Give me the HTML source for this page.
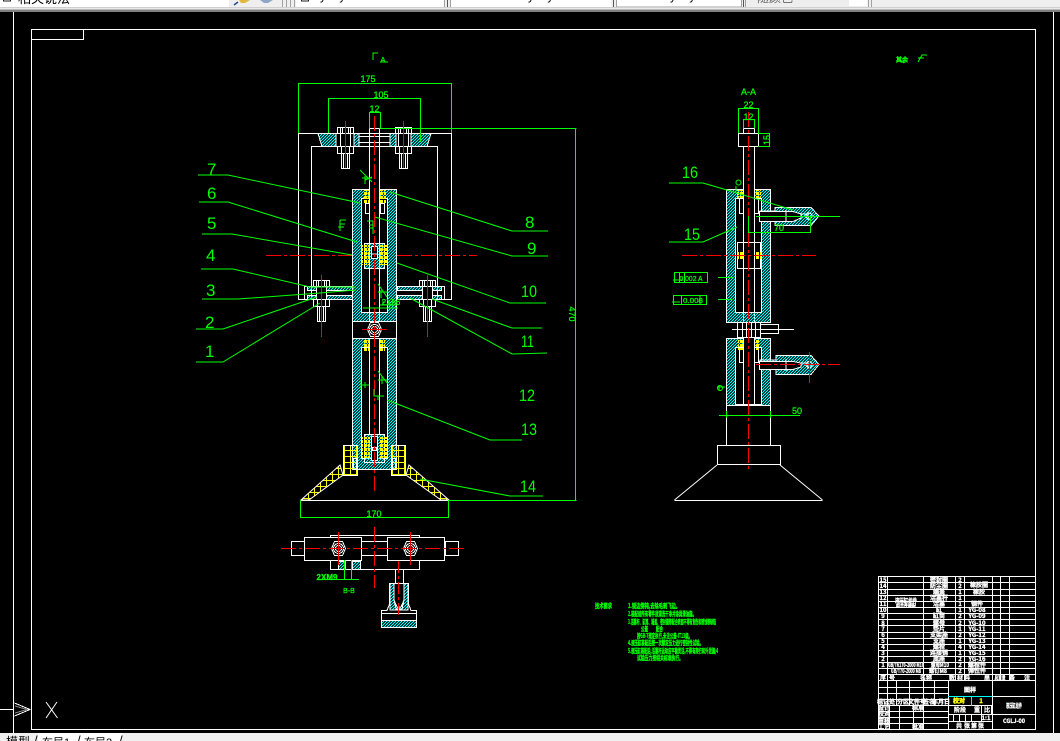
<!DOCTYPE html>
<html lang="zh"><head><meta charset="utf-8"><title>CAD</title>
<style>
html,body{margin:0;padding:0;width:1060px;height:741px;overflow:hidden;background:#f0f0f0;font-family:"Liberation Sans","Noto Sans CJK SC",sans-serif}
svg{position:absolute;left:0;top:0;display:block}
.n{font:17px "Liberation Sans",sans-serif;fill:#0f0}
.d{font:9px "Liberation Sans",sans-serif;fill:#0f0;text-anchor:middle;stroke:#0f0;stroke-width:.25}
.b{font:bold 6.5px "Noto Sans CJK SC",sans-serif;fill:#0f0;stroke:#0f0;stroke-width:.35}
.t{font:bold 6px "Noto Sans CJK SC","Liberation Sans",sans-serif;fill:#fff;text-anchor:middle;stroke:#fff;stroke-width:.3}
.y{font:bold 6px "Noto Sans CJK SC",sans-serif;fill:#ff0;text-anchor:middle;stroke:#ff0;stroke-width:.4}
.ui{font:13px "Liberation Sans","Noto Sans CJK SC",sans-serif;fill:#000}
</style></head><body>
<svg width="1060" height="741" viewBox="0 0 1060 741" xmlns="http://www.w3.org/2000/svg">
<defs>
<pattern id="h" width="3" height="3" patternUnits="userSpaceOnUse"><path d="M-1 1L1 -1M0 3L3 0M2 4L4 2" stroke="#0ff" stroke-width="1.1" shape-rendering="crispEdges"/></pattern>
<pattern id="yp" width="4" height="4" patternUnits="userSpaceOnUse"><rect width="3" height="3" fill="#ff0"/></pattern>
<pattern id="yg" width="6" height="6" patternUnits="userSpaceOnUse"><path d="M0 .5H6M2.5 0V6" stroke="#ff0" fill="none" shape-rendering="crispEdges"/></pattern>
<g id="bolt" fill="#000" stroke="#fff">
<rect x="-8" y="-6" width="16" height="6"/><path d="M-5 -6V0M5 -6V0M-3 -6V0M3 -6V0"/>
<rect x="-5" y="0" width="10" height="13"/><rect x="-8" y="13" width="16" height="7"/><path d="M-4 13V20M4 13V20"/>
<rect x="-4" y="20" width="8" height="15"/><path d="M-2 20V35M2 20V35"/>
</g>
<g id="hex" fill="#000" stroke="#fff"><polygon points="-7,0 -4,-7 4,-7 7,0 4,7 -4,7"/><circle r="5"/><circle r="3"/></g>
</defs>

<!-- top toolbar -->
<rect width="1060" height="12" fill="#efefef"/>
<rect x="0" y="0" width="229" height="7" fill="#fff"/>
<rect x="296" y="0" width="148" height="7" fill="#fff"/>
<rect x="451" y="0" width="160" height="7" fill="#fff"/>
<rect x="617" y="0" width="124" height="7" fill="#fff"/>
<rect x="749" y="0" width="100" height="6" fill="#eee"/><rect x="849" y="0" width="18" height="6" fill="#fff"/>
<g stroke="#a0a0a0" fill="none" shape-rendering="crispEdges">
<path d="M282.5 0V8M286.5 0V8M290.5 0V8M294.5 0V8"/><path d="M444.5 0V8M450.5 0V8"/><path d="M745.5 0V8H868.5V0M871.5 0V9"/><path d="M616.5 0V7H741.5V0"/>
</g>
<path d="M447.5 0V8M613.5 0V7M743.5 0V7" stroke="#555" shape-rendering="crispEdges"/>
<text class="ui" x="18" y="3">相关说法</text>
<rect x="3.5" y="-6" width="7" height="7" fill="#fff" stroke="#222"/>
<path d="M239 0H250L245 3H241Z" fill="#e2b93c"/><path d="M234 5L238 2" stroke="#234a90" stroke-width="1.5"/>
<path d="M260 0H273L268 3H264Z" fill="#8ea6c8"/>
<rect x="301.5" y="-6" width="7" height="7" fill="#fff" stroke="#222"/>
<text class="ui" x="312" y="0" style="font-size:12px">ByLayer</text>
<text class="ui" x="520" y="0" style="font-size:12px">ByLayer</text>
<text class="ui" x="662" y="0" style="font-size:12px">ByLayer</text>
<text class="ui" x="757" y="2" style="fill:#666;font-size:12px">随颜色</text>
<rect y="7" width="1060" height="1" fill="#cfcfcf"/><rect y="8" width="1060" height="1" fill="#e8e8e8"/>
<rect y="9" width="1060" height="1" fill="#b8b8b8"/><rect y="10" width="1060" height="2" fill="#808080"/>

<!-- canvas -->
<rect x="0" y="12" width="1060" height="721" fill="#000"/>

<!-- bottom tabs -->
<rect y="733" width="1060" height="8" fill="#f0f0f0"/><rect x="38" y="733" width="84" height="8" fill="#fff"/>
<text class="ui" x="6" y="746" style="font-size:12px">模型</text>
<text class="ui" x="34" y="745" style="font-size:13px">/</text>
<text class="ui" x="42" y="746" style="font-size:11px">布局1</text>
<text class="ui" x="77" y="745" style="font-size:13px">/</text>
<text class="ui" x="84" y="746" style="font-size:11px">布局2</text>
<text class="ui" x="119" y="745" style="font-size:13px">/</text>

<g shape-rendering="crispEdges" fill="none" stroke-width="1">
<!-- frames -->
<g stroke="#fff">
<path d="M13.5 12V733M1053.5 12V733"/>
<rect x="31.5" y="29.5" width="1004" height="700"/>
<rect x="31.5" y="29.5" width="52" height="10"/>
<!-- UCS -->
<path d="M0 709.5H14"/><path d="M14.5 703L30 709.5L14.5 716"/>
</g>
<path d="M15 706L27 709.5L15 713" stroke="#888"/>
<path d="M46 702L57.5 718M57 702L46 718" stroke="#fff" shape-rendering="auto"/>

<!-- MAIN VIEW -->
<g stroke="#fff">
<!-- frame -->
<path d="M298.5 133.5H451.5V299.5H437.5V146.5H311.5V299.5H298.5Z"/>
<!-- top plate -->
<polygon points="318,133.5 336,133.5 336,146.5 322,146.5" fill="url(#h)"/>
<polygon points="354,133.5 359,133.5 359,146.5 354,146.5" fill="url(#h)"/>
<polygon points="390,133.5 396,133.5 396,146.5 390,146.5" fill="url(#h)"/>
<polygon points="411,133.5 431,133.5 427,146.5 411,146.5" fill="url(#h)"/>
<path d="M359 136.5H390M359 142.5H390"/>
<!-- flanges -->
<rect x="304.5" y="286.5" width="48" height="13"/><rect x="396.5" y="286.5" width="48" height="13"/>
<rect x="307.5" y="286.5" width="45" height="4" fill="url(#h)"/><rect x="307.5" y="295.5" width="45" height="4" fill="url(#h)"/>
<rect x="397.5" y="286.5" width="44" height="4" fill="url(#h)"/><rect x="397.5" y="295.5" width="44" height="4" fill="url(#h)"/>
</g>
<use href="#bolt" x="345.5" y="133.5"/><use href="#bolt" x="403.5" y="133.5"/>
<use href="#bolt" x="321.5" y="286.5"/><use href="#bolt" x="427.5" y="286.5"/>

<g stroke="#fff">
<!-- upper cylinder -->
<path fill-rule="evenodd" d="M352.5 189.5H369.5V198.5H361.5V312.5H387.5V198.5H379.5V189.5H396.5V321.5H352.5Z" fill="url(#h)"/>
<path d="M369.5 128.5H379.5M369.5 128.5V243M379.5 128.5V243M369.5 268V321M379.5 268V321"/>
<rect x="365.5" y="203.5" width="4" height="10"/><rect x="380.5" y="203.5" width="4" height="10"/>
<rect x="364.5" y="243.5" width="20" height="25" fill="url(#h)"/>
<path d="M369.5 243V268M379.5 243V268"/>
<rect x="371.5" y="246.5" width="6" height="12" fill="#000"/><path d="M371 254H378"/>
<!-- connector -->
<rect x="352.5" y="321.5" width="44" height="17"/>
<!-- lower cylinder -->
<path d="M352.5 338.5H369.5V347.5H361.5V458.5H387.5V347.5H379.5V338.5H396.5V469.5H352.5Z" fill="url(#h)"/>
<path d="M369.5 338.5V434M379.5 338.5V434"/>
<rect x="364.5" y="434.5" width="20" height="28" fill="url(#h)"/>
<rect x="371.5" y="436.5" width="6" height="24" fill="#000"/><rect x="372.5" y="447.5" width="4" height="3" fill="#f00"/>
<!-- feet -->
<rect x="343.5" y="445.5" width="14" height="30" fill="url(#yg)"/>
<rect x="391.5" y="445.5" width="14" height="30" fill="url(#yg)"/>
<rect x="353.5" y="458.5" width="3" height="11" fill="url(#h)"/><rect x="392.5" y="458.5" width="3" height="11" fill="url(#h)"/>
<polygon points="301,500 340,465 343,475 309,500" fill="url(#yg)" shape-rendering="auto"/>
<polygon points="449,500 409,465 406,475 441,500" fill="url(#yg)" shape-rendering="auto"/>
<path d="M300.5 500.5H449.5"/>
</g>
<!-- yellow liners -->
<g fill="url(#yp)" stroke="none">
<rect x="363" y="190" width="6" height="13"/><rect x="380" y="190" width="6" height="13"/>
<rect x="361" y="245" width="8" height="20"/><rect x="380" y="245" width="8" height="20"/>
<rect x="364" y="339" width="5" height="13"/><rect x="380" y="339" width="5" height="13"/>
<rect x="362" y="437" width="8" height="21"/><rect x="380" y="437" width="8" height="21"/>
</g>
<use href="#hex" x="374.5" y="329.5"/>

<!-- red main view -->
<g stroke="#f00">
<path d="M374.5 116V492" stroke-dasharray="15 3 3 3"/>
<path d="M266 255.5H352M397 255.5H477" stroke-dasharray="15 3 3 3"/>
<path d="M362 329.5H387"/>
<path d="M345.5 121V168M403.5 121V168M321.5 275V337M427.5 275V337"/>
</g>

<!-- green dims main -->
<g stroke="#0f0">
<path d="M298.5 133V83.5H451.5V133"/>
<path d="M328.5 133V98.5H420.5V142"/>
<path d="M369.5 128V112.5H380.5V128"/>
<path d="M380 128.5H576.5M449 500.5H576.5M575.5 128V500"/>
<path d="M300.5 500V517.5H448.5V500"/>
</g>
<g stroke="#0f0" shape-rendering="auto">
<path d="M198 175H228L360 203"/>
<path d="M199 202H228L357 242"/>
<path d="M202 234H232L352 255"/>
<path d="M201 269H233L310 287H356"/>
<path d="M202 299H238L320 293L356 290"/>
<path d="M196 329H223L317 297"/>
<path d="M196 362H223L320 303"/>
<path d="M390 192L512 231H548"/>
<path d="M375 217L512 256H548"/>
<path d="M397 263L510 303H546"/>
<path d="M432 299L512 328H542"/>
<path d="M410 298L512 354L547 353"/>
<path d="M387 400L490 440H522"/>
<path d="M420 479L510 496H543"/>
<!-- roughness & marks -->
<path d="M360 170L372 182M365 176V184M362 178H372M365 180L372 177"/>
<path d="M378 284L387 297M381 290V298M378 292H388"/>
<path d="M340 220V231M340 220H346M340 224H345M344 227H338"/>
<path d="M367 221H373V234M369 225H373M369 228H373"/>
<path d="M363 308H398"/>
<path d="M374 389V396H384M378 396V400"/>
<path d="M361 380V390M361 385H369M365 382V388"/>
<path d="M378 371L388 384M382 376V384M378 380H388"/>
<path d="M373 60V53H378M380 62H388"/>
</g>
<path d="M380 305H397M383 301V305M389 301V305" stroke="#0f0"/>

<!-- BOTTOM VIEW -->
<g stroke="#fff">
<rect x="330.5" y="535.5" width="89" height="34"/>
<rect x="291.5" y="541.5" width="13" height="14" fill="#000"/><rect x="445.5" y="541.5" width="13" height="14" fill="#000"/>
<path d="M362 541.5H387M362 555.5H387"/>
<rect x="304.5" y="537.5" width="57" height="23" fill="#000"/><rect x="387.5" y="537.5" width="57" height="23" fill="#000"/>
<rect x="338.5" y="561.5" width="7" height="8" fill="url(#h)"/><rect x="352.5" y="561.5" width="8" height="8" fill="url(#h)"/>
<path d="M395.5 569V583M403.5 569V583"/>
<path d="M389.5 583.5H408.5V604L411 610.5H416.5V627.5H381.5V610.5H387L389.5 604Z"/>
<path d="M390 583.5H394V600L397 607H401L404 600V583.5H408V610H390Z" fill="url(#h)"/>
<path d="M381.5 613.5H416.5"/>
<rect x="381.5" y="620.5" width="35" height="7" fill="url(#h)"/>
<path d="M394 600L396 609H402L404 600"/>
</g>
<use href="#hex" x="338.5" y="548.5"/><use href="#hex" x="410.5" y="548.5"/>
<g stroke="#f00">
<path d="M281 548.5H466" stroke-dasharray="15 3 3 3"/>
<path d="M374.5 527V588" stroke-dasharray="15 3 3 3"/>
<path d="M338.5 532V565M410.5 532V565"/>
<path d="M398.5 561V618" stroke-dasharray="12 3 3 3"/>
</g>
<path d="M320 579.5H359M344.5 560V579M351.5 560V579" stroke="#0f0"/>

<!-- SIDE VIEW -->
<g stroke="#fff">
<rect x="738.5" y="133.5" width="20" height="13" fill="#000"/>
<path d="M743.5 128.5H754.5M743.5 128.5V133M754.5 128.5V133M743.5 146V336M754.5 146V336"/>
<path fill-rule="evenodd" d="M726.5 189.5H743.5V198.5H735.5V312.5H761.5V198.5H754.5V189.5H770.5V322.5H726.5Z" fill="url(#h)"/>
<rect x="739.5" y="198.5" width="4" height="15"/><rect x="754.5" y="198.5" width="4" height="15"/>
<rect x="737.5" y="242.5" width="23" height="26" fill="#000"/>
<path d="M743.5 242V268M754.5 242V268"/>
<!-- connector -->
<rect x="737.5" y="322.5" width="23" height="15" fill="#000"/><path d="M742.5 322V337M746.5 322V337M751.5 322V337M755.5 322V337"/>
<path d="M760.5 324.5H778.5V333.5H760.5M732 329.5H794"/>
<!-- lower -->
<path d="M726.5 338.5H743.5V347.5H735.5V404.5H761.5V347.5H754.5V338.5H770.5V405.5H726.5Z" fill="url(#h)"/>
<path d="M743.5 338V404M754.5 338V404"/>
<rect x="739.5" y="347.5" width="4" height="15"/><rect x="754.5" y="347.5" width="4" height="15"/>
<path d="M726.5 405V445.5M770.5 405V445.5"/>
<rect x="717.5" y="445.5" width="63" height="19"/>
<path d="M674.5 500.5H822.5"/>
<!-- handles -->
<path d="M775 207.5H811L819 216L811 225.5H775V221H760V211H775Z" fill="url(#h)"/>
<path d="M759.5 211.5H793L801 214V218L793 221.5H759.5Z" fill="#000"/><path d="M786 210V222M801 214H808M808 212V220"/>
<circle cx="809" cy="216" r="3"/>
<path d="M776 355.5H811L819 364.5L811 374.5H776V369H760V360H776Z" fill="url(#h)"/>
<path d="M759.5 361.5H793L801 363V367L793 369.5H759.5Z" fill="#000"/><path d="M786 359V371M801 363H808M808 361V369"/>
<circle cx="809" cy="364.5" r="3"/>
</g>
<path d="M717 465L674.5 500M780 465L822.5 500" stroke="#fff" shape-rendering="auto"/>
<g fill="url(#yp)"><rect x="737" y="190" width="6" height="8"/><rect x="755" y="190" width="6" height="8"/>
<rect x="737" y="251" width="6" height="8"/><rect x="755" y="251" width="6" height="8"/>
<rect x="738" y="340" width="5" height="10"/><rect x="755" y="340" width="5" height="10"/></g>
<g stroke="#f00">
<path d="M748.5 112V470" stroke-dasharray="15 3 3 3"/>
<path d="M682 255.5H816" stroke-dasharray="15 3 3 3"/>
<path d="M756 364.5H840" stroke-dasharray="15 3 3 3"/>
<path d="M809.5 352V383"/>
</g>
<g stroke="#0f0">
<path d="M738.5 133V108.5H758.5V133"/>
<path d="M743.5 128V119.5H754.5V128"/>
<path d="M758 133.5H769.5V146.5H758"/>
<path d="M756 216.5H840"/>
<path d="M748.5 216V232.5H810.5V216"/>
<rect x="674.5" y="272.5" width="33" height="10"/><path d="M679.5 272V283M684.5 272V283M673 280H682M718 277.5H734"/>
<rect x="673.5" y="295.5" width="33" height="9"/><path d="M681.5 295V305M700 295V305M672 302H680M718 299.5H733"/>
<path d="M719 415.5H800M726.5 411V418M770.5 411V418"/>
<path d="M736 192V186"/>
</g>
<g stroke="#0f0" shape-rendering="auto">
<path d="M669 183H703L727 190L793 210"/>
<path d="M669 242H703L737 227"/>
<circle cx="738.5" cy="182.5" r="2.5"/>
<path d="M717 387H725M719 385V390"/>
<circle cx="720" cy="388" r="2.5"/>
<path d="M897 58L904 63M918 62L922 55L927 55M918 58H924"/>
</g>

<!-- TITLE BLOCK -->
<g stroke="#fff">
<rect x="878.5" y="576.5" width="157" height="153" fill="#000"/>
<path d="M878.5 582.5H1035.5M878.5 589.5H1035.5M878.5 595.5H1035.5M878.5 601.5H1035.5M878.5 607.5H1035.5M878.5 613.5H1035.5M878.5 619.5H1035.5M878.5 625.5H1035.5M878.5 632.5H1035.5M878.5 638.5H1035.5M878.5 644.5H1035.5M878.5 650.5H1035.5M878.5 656.5H1035.5M878.5 662.5H1035.5M878.5 668.5H1035.5M878.5 674.5H1035.5M878.5 680.5H1035.5"/>
<path d="M887.5 576V681M923.5 576V681M955.5 576V681M964.5 576V681M992.5 576V681M1000.5 576V681M1009.5 576V681"/>
<path d="M878.5 687.5H948.5M878.5 693.5H948.5M878.5 699.5H948.5M878.5 705.5H948.5M878.5 711.5H948.5M878.5 717.5H948.5M878.5 723.5H948.5"/>
<path d="M887.5 681V705M896.5 681V705M909.5 681V705M923.5 681V705M934.5 681V705M948.5 681V729.5"/>
<path d="M889.5 705V729.5M899.5 705V729.5M913.5 705V729.5M923.5 705V729.5"/>
<path d="M992.5 681V729.5"/>
<path d="M992.5 696.5H1035.5M948.5 705.5H992.5M948.5 714.5H1035.5M948.5 721.5H992.5"/>
<path d="M981.5 705V721M991.5 705V714M953.5 714V721M959.5 714V721M965.5 714V721M971.5 714V721"/>
</g>
<path d="M948 696.5H992.5M971.5 696V706" stroke="#0ff"/>
</g>

<!-- main view texts -->
<text class="n" x="207" y="175">7</text>
<text class="n" x="207" y="199">6</text>
<text class="n" x="207" y="229">5</text>
<text class="n" x="206" y="261">4</text>
<text class="n" x="206" y="296">3</text>
<text class="n" x="205" y="328">2</text>
<text class="n" x="205" y="357">1</text>
<text class="n" x="525" y="228">8</text>
<text class="n" x="527" y="254">9</text>
<text class="n" x="521" y="297" textLength="16" lengthAdjust="spacingAndGlyphs">10</text>
<text class="n" x="521" y="347" textLength="13" lengthAdjust="spacingAndGlyphs">11</text>
<text class="n" x="519" y="401" textLength="16" lengthAdjust="spacingAndGlyphs">12</text>
<text class="n" x="521" y="435" textLength="16" lengthAdjust="spacingAndGlyphs">13</text>
<text class="n" x="520" y="492" textLength="16" lengthAdjust="spacingAndGlyphs">14</text>
<text class="n" x="682" y="178" textLength="16" lengthAdjust="spacingAndGlyphs">16</text>
<text class="n" x="684" y="240" textLength="16" lengthAdjust="spacingAndGlyphs">15</text>

<text class="d" x="368" y="82">175</text>
<text class="d" x="381" y="98">105</text>
<text class="d" x="374.5" y="112">12</text>
<text class="d" x="374" y="517">170</text>
<text class="d" x="748.5" y="95">A-A</text>
<text class="d" x="748.5" y="108">22</text>
<text class="d" x="748.5" y="120">12</text>
<text class="d" x="779" y="231">70</text>
<text class="d" x="797" y="414">50</text>
<text class="d" transform="translate(767,140) rotate(-90)" y="3">15</text>
<text class="d" transform="translate(569,314) rotate(90)" style="font-size:9px">470</text>
<text class="d" x="391" y="305" style="font-size:8px">2Xh6</text>
<text class="d" x="383" y="62" style="font-size:7px">A</text>
<text class="d" x="327" y="580" style="font-size:8px;font-weight:bold">2XM9</text>
<text class="d" x="349" y="593" style="font-size:7px">B-B</text>
<text class="d" x="691" y="281" style="font-size:7px" textLength="23" lengthAdjust="spacingAndGlyphs">0.002 A</text>
<text class="d" x="693" y="303" style="font-size:7px" textLength="20" lengthAdjust="spacingAndGlyphs">0.008</text>
<text class="d" x="902" y="62" style="font-size:6px;font-weight:bold">其余</text>

<!-- notes -->
<text class="b" x="595" y="608" textLength="17" lengthAdjust="spacingAndGlyphs">技术要求</text>
<text class="b" x="628" y="608" textLength="52" lengthAdjust="spacingAndGlyphs">1.锐边倒钝,去除毛刺飞边。</text>
<text class="b" x="628" y="616" textLength="68" lengthAdjust="spacingAndGlyphs">2.装配前所有零件须清洗干净并涂润滑油脂。</text>
<text class="b" x="628" y="624" textLength="88" lengthAdjust="spacingAndGlyphs">3.活塞杆、缸筒、端盖、密封圈等配合表面不得有划伤和锈蚀等缺陷</text>
<text class="b" x="641" y="631" textLength="7" lengthAdjust="spacingAndGlyphs">公差</text>
<text class="b" x="656" y="631" textLength="7" lengthAdjust="spacingAndGlyphs">配合</text>
<text class="b" x="637" y="638" textLength="55" lengthAdjust="spacingAndGlyphs">按GB-T规定执行,未注公差-IT13级。</text>
<text class="b" x="628" y="645" textLength="75" lengthAdjust="spacingAndGlyphs">4.液压缸装配后按一次额定压力进行密封性试验。</text>
<text class="b" x="628" y="653" textLength="90" lengthAdjust="spacingAndGlyphs">5.液压缸装配后,活塞杆运动应平稳灵活,不得有爬行和外泄漏;4</text>
<text class="b" x="637" y="660" textLength="46" lengthAdjust="spacingAndGlyphs">试验压力按相关标准执行。</text>

<!-- title block text -->
<g>
<text class="t" x="883" y="582">15</text><text class="t" x="883" y="588">14</text><text class="t" x="883" y="594">13</text><text class="t" x="883" y="600">12</text><text class="t" x="883" y="606">11</text><text class="t" x="883" y="612">10</text><text class="t" x="883" y="618">9</text><text class="t" x="883" y="625">8</text><text class="t" x="883" y="631">7</text><text class="t" x="883" y="637">6</text><text class="t" x="883" y="643">5</text><text class="t" x="883" y="649">4</text><text class="t" x="883" y="655">3</text><text class="t" x="883" y="661">2</text><text class="t" x="883" y="667">1</text>
<text class="t" x="939" y="582">密封圈</text><text class="t" x="939" y="588">防尘圈</text><text class="t" x="939" y="594">端盖</text><text class="t" x="939" y="600">活塞杆</text><text class="t" x="939" y="606">活塞</text><text class="t" x="939" y="612">缸</text><text class="t" x="939" y="618">缸筒</text><text class="t" x="939" y="625">螺母</text><text class="t" x="939" y="631">垫片</text><text class="t" x="939" y="637">支架座</text><text class="t" x="939" y="643">支座</text><text class="t" x="939" y="649">螺栓</text><text class="t" x="939" y="655">连接销</text><text class="t" x="939" y="661">底座</text>
<text class="t" x="960" y="582">2</text><text class="t" x="960" y="588">2</text><text class="t" x="960" y="594">1</text><text class="t" x="960" y="600">1</text><text class="t" x="960" y="606">1</text><text class="t" x="960" y="612">1</text><text class="t" x="960" y="618">2</text><text class="t" x="960" y="625">2</text><text class="t" x="960" y="631">1</text><text class="t" x="960" y="637">2</text><text class="t" x="960" y="643">1</text><text class="t" x="960" y="649">4</text><text class="t" x="960" y="655">1</text><text class="t" x="960" y="661">2</text><text class="t" x="960" y="667">2</text><text class="t" x="960" y="673">2</text>
<text class="t" x="979" y="587">橡胶圈</text><text class="t" x="979" y="594">橡胶</text><text class="t" x="977" y="606">钢件</text><text class="t" x="977" y="612">YG-08</text><text class="t" x="977" y="618">YG-09</text><text class="t" x="977" y="625">YG-10</text><text class="t" x="977" y="631">YG-11</text><text class="t" x="977" y="637">YG-12</text><text class="t" x="977" y="643">YG-13</text><text class="t" x="977" y="649">YG-14</text><text class="t" x="977" y="655">YG-15</text><text class="t" x="977" y="661">YG-16</text><text class="t" x="977" y="667">螺栓件</text><text class="t" x="977" y="673">弹性件</text>
<text class="t" x="906" y="603" textLength="22" lengthAdjust="spacingAndGlyphs">液压缸组件</text>
<text class="t" x="906" y="607" style="font-size:4px">组合件装配</text>
<text class="t" x="906" y="667" textLength="36" lengthAdjust="spacingAndGlyphs">GB/T6170-2000 M10</text>
<text class="t" x="940" y="667" textLength="18" lengthAdjust="spacingAndGlyphs">螺母M10</text>
<text class="t" x="906" y="673" textLength="30" lengthAdjust="spacingAndGlyphs">GB/T70-2000 M8</text>
<text class="t" x="938" y="673" textLength="18" lengthAdjust="spacingAndGlyphs">螺钉M8</text>
<text class="t" x="883" y="680">序</text><text class="t" x="892" y="680">号</text><text class="t" x="923" y="680">名</text><text class="t" x="929" y="680">称</text><text class="t" x="952" y="680">数</text><text class="t" x="960" y="680">材</text><text class="t" x="967" y="680">料</text><text class="t" x="987" y="680">单</text><text class="t" x="1000" y="680" textLength="11" lengthAdjust="spacingAndGlyphs">总重量</text><text class="t" x="1012" y="680">备</text><text class="t" x="1027" y="680">注</text>
<text class="t" x="883" y="704">标记</text><text class="t" x="892" y="704">处</text><text class="t" x="903" y="704">分区</text><text class="t" x="917" y="704">文件号</text><text class="t" x="929" y="704">签名</text><text class="t" x="941" y="704">年月日</text>
<text class="t" x="884" y="710">设计</text><text class="t" x="918" y="710">标准</text><text class="t" x="884" y="716">校对</text><text class="t" x="884" y="723">审核</text><text class="t" x="884" y="729">工艺</text><text class="t" x="918" y="729">批准</text>
<text class="t" x="970" y="692">图样</text><text class="y" x="959" y="703">校对</text><text class="y" x="981" y="703">1</text>
<text class="t" x="960" y="712">阶段</text><text class="t" x="977" y="712">重</text><text class="t" x="987" y="712">比</text><text class="t" x="986" y="720">1:1</text>
<text class="t" x="959" y="728">共</text><text class="t" x="967" y="728">张</text><text class="t" x="974" y="728">第</text><text class="t" x="981" y="728">张</text>
<text class="t" x="1014" y="708" textLength="16" lengthAdjust="spacingAndGlyphs">液压缸组件</text>
<text class="t" x="1014" y="723" textLength="22" lengthAdjust="spacingAndGlyphs">CGLJ-00</text>
</g>
</svg>
</body></html>
